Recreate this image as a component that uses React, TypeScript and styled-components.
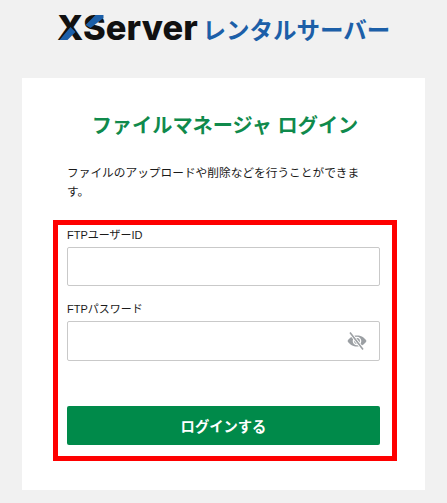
import React from "react";
import styled, { createGlobalStyle } from "styled-components";

const GlobalStyle = createGlobalStyle`
  * { box-sizing: border-box; }
  html, body { margin: 0; padding: 0; background: #f1f1f1; }
  body { font-family: "Liberation Sans", "Noto Sans CJK JP", sans-serif; color: #1a1a1a; overflow: hidden; }
`;

const Page = styled.div`
  width: 447px;
  height: 503px;
  padding: 0 22px 13px;
  display: flex;
  flex-direction: column;
`;

const Brand = styled.header`
  height: 78px;
  display: flex;
  justify-content: center;
`;

const Logo = styled.svg`
  width: 340px;
  height: 60px;
  display: block;
`;

const Card = styled.main`
  flex: 1;
  width: 403px;
  background: #fff;
  padding: 31px 28px 0 31px;
`;

const Title = styled.h1`
  margin: 0 0 20px;
  font-size: 20.2px;
  line-height: 34px;
  font-weight: 700;
  color: #108a4c;
  text-align: center;
`;

const Lead = styled.p`
  margin: 0 0 19px 14px;
  width: 300px;
  font-size: 11.7px;
  line-height: 19px;
`;

const Highlight = styled.form`
  width: 344px;
  height: 241px;
  border: 5px solid #fe0000;
  padding: 0 12px 0 9px;
`;

const Field = styled.div<{ $gap: number }>`
  margin-bottom: ${(p) => p.$gap}px;
`;

const Label = styled.label`
  display: block;
  height: 22px;
  font-size: 11px;
  line-height: 21px;
`;

const InputWrap = styled.div`
  position: relative;
`;

const Input = styled.input<{ $height: number }>`
  display: block;
  width: 313px;
  height: ${(p) => p.$height}px;
  border: 1px solid #c9c9c9;
  border-radius: 2px;
  background: #fff;
`;

const EyeIcon = styled.svg`
  position: absolute;
  right: 13px;
  top: 10px;
  width: 20px;
  height: 20px;
`;

const Submit = styled.button`
  display: block;
  width: 313px;
  height: 39px;
  border: 0;
  border-radius: 2px;
  background: #008a4a;
  color: #fff;
  font-family: inherit;
  font-size: 14.3px;
  font-weight: 700;
`;

export default function App() {
  return (
    <Page>
      <GlobalStyle />
      <Brand>
        <Logo viewBox="0 0 340 60">
          <text x="3" y="40" fontFamily="Inter, 'Liberation Sans', sans-serif" fontWeight="800" fontSize="34.5" letterSpacing="0.1" fill="#111">
            XServer
          </text>
          <path d="M5.5 40 L13.5 40 L21.5 32 L16.5 27 Z M31.5 25 L36.5 28 L49.5 18 L49.5 15 L41.5 15 Z" fill="#1c5fa8" />
          <text x="148.5" y="38.5" fontFamily="'Noto Sans CJK JP', sans-serif" fontWeight="700" fontSize="23.5" letterSpacing="0" fill="#1c5fa8">
            レンタルサーバー
          </text>
        </Logo>
      </Brand>
      <Card>
        <Title>ファイルマネージャ ログイン</Title>
        <Lead>ファイルのアップロードや削除などを行うことができます。</Lead>
        <Highlight>
          <Field $gap={13}>
            <Label>FTPユーザーID</Label>
            <Input type="text" $height={39} />
          </Field>
          <Field $gap={45}>
            <Label>FTPパスワード</Label>
            <InputWrap>
              <Input type="password" $height={40} />
              <EyeIcon viewBox="0 0 20 20">
                <path d="M0.5 10 C3 6 6 4.5 10 4.5 C14 4.5 17 6 19.5 10 C17 14 14 15.5 10 15.5 C6 15.5 3 14 0.5 10 Z" fill="#9b9fa3" />
                <circle cx="10" cy="10" r="3.6" fill="none" stroke="#fff" strokeWidth="1.4" />
                <path d="M3 1.5 L16 18.5" stroke="#fff" strokeWidth="3.4" />
                <path d="M3 1.5 L16 18.5" stroke="#9b9fa3" strokeWidth="1.6" />
              </EyeIcon>
            </InputWrap>
          </Field>
          <Submit type="button">ログインする</Submit>
        </Highlight>
      </Card>
    </Page>
  );
}
